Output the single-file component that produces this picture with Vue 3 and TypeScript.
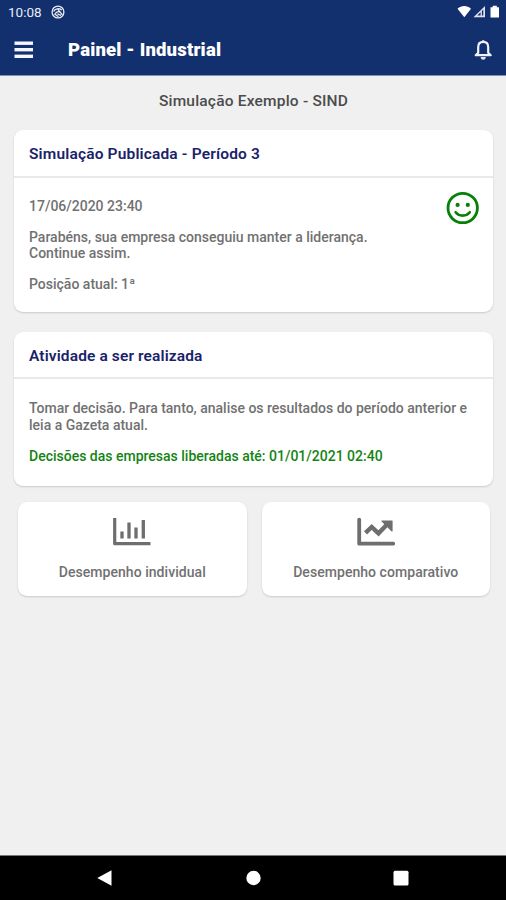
<script setup lang="ts">
interface Notice {
  title: string
  happy: boolean
  paragraphs: { text: string; kind: string }[]
}

const notices: Notice[] = [
  {
    title: 'Simulação Publicada - Período 3',
    happy: true,
    paragraphs: [
      { text: '17/06/2020 23:40', kind: 'date' },
      { text: 'Parabéns, sua empresa conseguiu manter a liderança.\nContinue assim.', kind: 'message' },
      { text: 'Posição atual: 1ª', kind: 'position' },
    ],
  },
  {
    title: 'Atividade a ser realizada',
    happy: false,
    paragraphs: [
      { text: 'Tomar decisão. Para tanto, analise os resultados do período anterior e\nleia a Gazeta atual.', kind: 'task' },
      { text: 'Decisões das empresas liberadas até: 01/01/2021 02:40', kind: 'deadline' },
    ],
  },
]
</script>

<template>
  <div class="screen">
    <header class="top">
      <div class="status">
        <span class="clock">10:08</span>
        <svg class="sync" width="14" height="14" viewBox="0 0 14 14" fill="none" stroke="#e9ecf5">
          <circle cx="7" cy="7" r="5.9" stroke-width="1.3" />
          <path d="M2.600 6.600C4 3.400 8 2.800 10.800 5M3.800 10.200C4.200 7.200 7 6 9.200 7.200M6.800 4.200l4.600 5.600M4.400 9.600l3 2.200M6.400 8.800l3.600 1.600" stroke-width="1.300" />
        </svg>
        <svg class="signals" width="43" height="14" viewBox="0 0 43 14">
          <path d="M0.5 3.8C4.3 .2 10.2 .2 14 3.8L7.3 12.3z" fill="#fff" />
          <path d="M16.500 12.200L28 1V12.200z" fill="#dfe3f0" />
          <path d="M20.300 10.600L23.600 7.300v3.300zM24.900 6l1.400-1.400v6h-1.400z" fill="#12306d" />
          <path d="M33.500 2.300h2.200V.8h4.100v1.500h2.200v10.200h-8.500z" fill="#fff" />
        </svg>
      </div>
      <div class="bar">
        <svg class="menu" width="20" height="18" viewBox="0 0 20 18" fill="#f5f6fa">
          <rect x="0.500" y="0.500" width="18.500" height="3.400" />
          <rect x="0.500" y="7" width="18.500" height="3.400" />
          <rect x="0.500" y="13.600" width="18.500" height="3.400" />
        </svg>
        <h1 class="title">Painel - Industrial</h1>
        <svg class="bell" width="20" height="22" viewBox="0 0 20 22">
          <path d="M10.200 2.900C7 2.900 5.200 5.200 5.200 8.200v5.500L2.700 16.200h15l-2.500-2.500V8.200c0-3-1.800-5.300-5-5.300z" fill="none" stroke="#f1f3f9" stroke-width="2.200" stroke-linejoin="round" />
          <path d="M8.700 2.600a1.500 1.500 0 013 0zM7.700 18h5a2.500 2.700 0 01-5 0z" fill="#e4e5ea" />
        </svg>
      </div>
    </header>

    <main class="content">
      <h2 class="simulation">Simulação Exemplo - SIND</h2>

      <section v-for="notice in notices" :key="notice.title" class="card">
        <h3 class="heading" :class="{ short: !notice.happy }">{{ notice.title }}</h3>
        <div class="body" :class="{ short: !notice.happy }">
          <div class="copy">
            <p v-for="p in notice.paragraphs" :key="p.kind" :class="p.kind">{{ p.text }}</p>
          </div>
          <svg v-if="notice.happy" class="smile" width="34" height="34" viewBox="0 0 34 34">
            <circle cx="16.700" cy="17" r="14.700" fill="none" stroke="#078007" stroke-width="2.800" />
            <circle cx="11.600" cy="13.900" r="2.100" fill="#078007" />
            <circle cx="21.800" cy="13.900" r="2.100" fill="#078007" />
            <path d="M9.600 21.200c3.600 4.500 10.600 4.500 14.200 0" fill="none" stroke="#078007" stroke-width="2.600" stroke-linecap="round" />
          </svg>
        </div>
      </section>

      <nav class="tiles">
        <div class="tile">
          <svg width="38" height="29" viewBox="0 0 38 29" fill="none" stroke="#6e6e6e">
            <path d="M1.700 1v25.700H37.500" stroke-width="3.200" stroke-linejoin="round" />
            <path d="M9 14.500v7M16 5.500v16M23 10.500v11M30.300 3v18.500" stroke-width="3.300" />
          </svg>
          <span class="label">Desempenho individual</span>
        </div>
        <div class="tile">
          <svg width="38" height="29" viewBox="0 0 38 29" fill="none" stroke="#6e6e6e">
            <path d="M2.200 2.600v24.100H36.200" stroke-width="3.800" stroke-linejoin="round" stroke-linecap="round" />
            <path d="M8.500 15.800L14.700 10L21.500 16.300L30.500 7" stroke-width="4.400" />
            <path d="M25 4H35V14z" fill="#6e6e6e" stroke-width="1.200" stroke-linejoin="round" />
          </svg>
          <span class="label">Desempenho comparativo</span>
        </div>
      </nav>
    </main>

    <footer class="system">
      <svg width="16" height="18" viewBox="0 0 16 18"><path d="M0.300 9L14.500 1.200v15.600z" fill="#fff" /></svg>
      <svg width="16" height="18" viewBox="0 0 16 18"><circle cx="8.500" cy="9" r="7.200" fill="#fff" /></svg>
      <svg width="16" height="18" viewBox="0 0 16 18"><rect x="0.500" y="1.800" width="15" height="14.700" rx="1.500" fill="#fff" /></svg>
    </footer>
  </div>
</template>

<style>
body {
  margin: 0;
}
</style>

<style scoped>
.screen {
  box-sizing: border-box;
  display: flex;
  flex-direction: column;
  width: 506px;
  height: 900px;
  overflow: hidden;
  background: #f0f0f0;
  color: #717171;
  font-family: Roboto, "Liberation Sans", sans-serif;
}

h1, h2, h3, p {
  margin: 0;
}

.top {
  height: 75px;
  background: #12306d;
  color: #fff;
  border-bottom: 1px solid #8290b0;
}

.status {
  display: flex;
  align-items: center;
  height: 24px;
  padding: 0 6px 0 8px;
}

.clock {
  width: 42px;
  color: #e9ecf5;
  font-size: 13.500px;
}

.sync {
  margin-left: 1px;
}

.signals {
  margin-left: auto;
}

.bar {
  display: flex;
  align-items: center;
  height: 52px;
  padding: 0 13px 0 14px;
}

.title {
  margin-left: 34px;
  font-size: 18.500px;
  font-weight: 900;
  line-height: 24px;
  letter-spacing: 0.180px;
}

.bell {
  margin-left: auto;
}

.content {
  flex: 1;
  padding: 0 13px 0 14px;
}

.simulation {
  padding: 15px 0 19px;
  color: #4c4c4c;
  font-size: 15.500px;
  font-weight: 500;
  line-height: 20px;
  letter-spacing: 0.200px;
  text-align: center;
}

.card {
  margin-bottom: 20px;
  border-radius: 9px;
  background: #fff;
  box-shadow: 0 1px 2px rgba(0, 0, 0, 0.16);
}

.heading {
  height: 46px;
  padding-left: 15px;
  border-bottom: 2px solid #e9e9e9;
  color: #1a2369;
  font-size: 15.500px;
  font-weight: 600;
  line-height: 48px;
  letter-spacing: 0.160px;
}

.heading.short {
  height: 45px;
  line-height: 48px;
  letter-spacing: 0.120px;
}

.body {
  display: flex;
  justify-content: space-between;
  box-sizing: border-box;
  height: 134px;
  padding: 20px 13px 0 15px;
}

.body.short {
  height: 107px;
  padding-top: 21px;
}

.copy {
  font-size: 14px;
  font-weight: 500;
  line-height: 16.500px;
  white-space: pre;
}

.copy p + p {
  margin-top: 14px;
}

.copy p + .deadline {
  margin-top: 15px;
  color: #138413;
}

.smile {
  margin-top: -7px;
}

.tiles {
  display: flex;
  gap: 15px;
  margin: -4px 3px 0 4px;
}

.tile {
  display: flex;
  flex: 1;
  flex-direction: column;
  align-items: center;
  box-sizing: border-box;
  height: 94px;
  padding-top: 15px;
  border-radius: 9px;
  background: #fff;
  box-shadow: 0 1px 2px rgba(0, 0, 0, 0.16);
}

.label {
  margin-top: 17px;
  font-size: 14px;
  font-weight: 500;
  line-height: 18px;
  letter-spacing: 0.050px;
}

.system {
  display: flex;
  justify-content: space-between;
  align-items: center;
  box-sizing: border-box;
  height: 45px;
  padding: 0 97px;
  border-top: 1px solid #777;
  background: #000;
}
</style>
